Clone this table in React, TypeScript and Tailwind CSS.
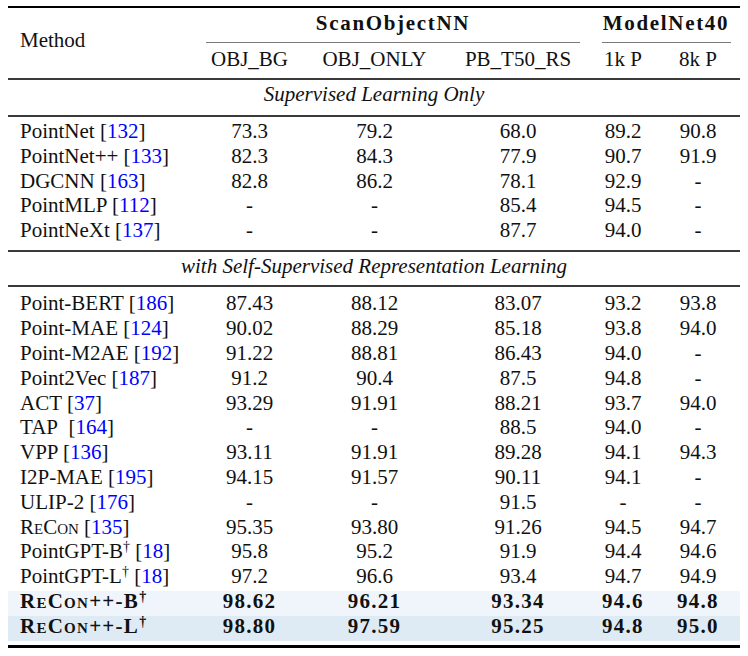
import clsx from 'clsx';
import type { ReactNode } from 'react';

const cols = 'grid grid-cols-[188px_107px_143px_144px_66px_84px]';

type Entry = {
  name: ReactNode;
  cite?: string;
  vals: string[];
  bold?: boolean;
  bg?: string;
};

function Cite({ n }: { n: string }) {
  return (
    <span>
      [<span className="text-[#0000ff]">{n}</span>]
    </span>
  );
}

function Dag() {
  return <sup className="text-[14px]">†</sup>;
}

function ReCon() {
  return <span className="[font-variant:small-caps]">ReCon</span>;
}

const supervised: Entry[] = [
  { name: 'PointNet', cite: '132', vals: ['73.3', '79.2', '68.0', '89.2', '90.8'] },
  { name: 'PointNet++', cite: '133', vals: ['82.3', '84.3', '77.9', '90.7', '91.9'] },
  { name: 'DGCNN', cite: '163', vals: ['82.8', '86.2', '78.1', '92.9', '-'] },
  { name: 'PointMLP', cite: '112', vals: ['-', '-', '85.4', '94.5', '-'] },
  { name: 'PointNeXt', cite: '137', vals: ['-', '-', '87.7', '94.0', '-'] },
];

const selfSupervised: Entry[] = [
  { name: 'Point-BERT', cite: '186', vals: ['87.43', '88.12', '83.07', '93.2', '93.8'] },
  { name: 'Point-MAE', cite: '124', vals: ['90.02', '88.29', '85.18', '93.8', '94.0'] },
  { name: 'Point-M2AE', cite: '192', vals: ['91.22', '88.81', '86.43', '94.0', '-'] },
  { name: 'Point2Vec', cite: '187', vals: ['91.2', '90.4', '87.5', '94.8', '-'] },
  { name: 'ACT', cite: '37', vals: ['93.29', '91.91', '88.21', '93.7', '94.0'] },
  { name: 'TAP\u00a0', cite: '164', vals: ['-', '-', '88.5', '94.0', '-'] },
  { name: 'VPP', cite: '136', vals: ['93.11', '91.91', '89.28', '94.1', '94.3'] },
  { name: 'I2P-MAE', cite: '195', vals: ['94.15', '91.57', '90.11', '94.1', '-'] },
  { name: 'ULIP-2', cite: '176', vals: ['-', '-', '91.5', '-', '-'] },
  { name: <ReCon />, cite: '135', vals: ['95.35', '93.80', '91.26', '94.5', '94.7'] },
  { name: <>PointGPT-B<Dag /></>, cite: '18', vals: ['95.8', '95.2', '91.9', '94.4', '94.6'] },
  { name: <>PointGPT-L<Dag /></>, cite: '18', vals: ['97.2', '96.6', '93.4', '94.7', '94.9'] },
  {
    name: <><ReCon />++-B<Dag /></>,
    vals: ['98.62', '96.21', '93.34', '94.6', '94.8'],
    bold: true,
    bg: 'bg-[#eff5fa]',
  },
  {
    name: <><ReCon />++-L<Dag /></>,
    vals: ['98.80', '97.59', '95.25', '94.8', '95.0'],
    bold: true,
    bg: 'bg-[#deebf4]',
  },
];

function Row({ e }: { e: Entry }) {
  return (
    <div className={clsx(cols, 'h-[24.8px] leading-[21px]', e.bg, e.bold && 'font-bold tracking-[0.06em]')}>
      <div className="pl-[12px] whitespace-nowrap">
        {e.name}
        {e.cite && (
          <>
            {' '}
            <Cite n={e.cite} />
          </>
        )}
      </div>
      {e.vals.map((v, i) => (
        <div key={i} className="text-center">
          {v}
        </div>
      ))}
    </div>
  );
}

function Rule({ thick }: { thick?: boolean }) {
  return <div className={clsx('h-[2px]', thick ? 'bg-[#000]' : 'bg-[#3a3a3a]')} />;
}

export default function App() {
  return (
    <div className="w-[748px] h-[656px] bg-white pt-[6px] pl-[8px] [font-family:'Liberation_Serif',serif] text-[21px] text-[#111]">
      <div className="w-[732px]">
        <Rule thick />

        <div className={clsx(cols, 'grid-rows-[34px_1px_35px] leading-[21px]')}>
          <div className="row-span-3 pl-[12px] pt-[22px]">Method</div>
          <div className="col-span-3 text-center font-bold tracking-[0.08em] pt-[5px]">ScanObjectNN</div>
          <div className="col-span-2 text-center font-bold tracking-[0.08em] pt-[5px] pl-[2px]">ModelNet40</div>
          <div className="col-span-3 mx-[10px] bg-[#7a7a7a]" />
          <div className="col-span-2 ml-[12px] mr-[9px] bg-[#7a7a7a]" />
          <div className="text-center pt-[6px]">OBJ_BG</div>
          <div className="text-center pt-[6px]">OBJ_ONLY</div>
          <div className="text-center pt-[6px]">PB_T50_RS</div>
          <div className="text-center pt-[6px]">1k P</div>
          <div className="text-center pt-[6px]">8k P</div>
        </div>

        <Rule />
        <div className="h-[35px] pt-[4px] leading-[21px] text-center italic">Supervised Learning Only</div>
        <Rule />

        <div className="pt-[4px] pb-[5px]">
          {supervised.map((e, i) => (
            <Row key={i} e={e} />
          ))}
        </div>

        <Rule />
        <div className="h-[33px] pt-[4px] leading-[21px] text-center italic">
          with Self-Supervised Representation Learning
        </div>
        <Rule />

        <div className="pt-[6.5px] pb-[4px]">
          {selfSupervised.map((e, i) => (
            <Row key={i} e={e} />
          ))}
        </div>

        <div className="h-[3px] bg-[#000]" />
      </div>
    </div>
  );
}
